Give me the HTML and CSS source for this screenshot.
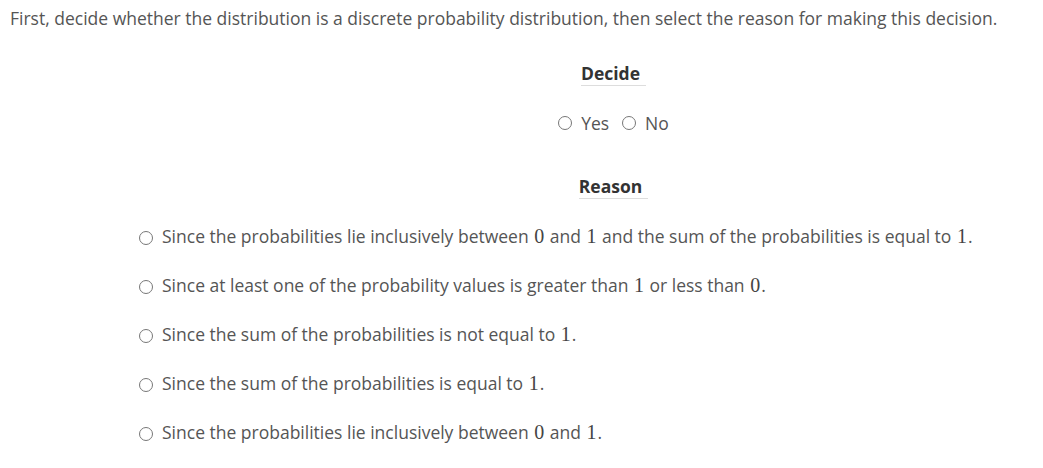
FILE: index.html
```html
<!DOCTYPE html>
<html>
<head>
<meta charset="utf-8">
<link rel="stylesheet" href="styles.css">
</head>
<body>
<p class="prompt">First, decide whether the distribution is a discrete probability distribution, then select the reason for making this decision.</p>
<div class="center-col">
  <div class="heading-wrap"><span class="heading">Decide</span></div>
  <div class="yesno">
    <label class="opt"><span class="radio"></span>Yes</label>
    <label class="opt"><span class="radio"></span>No</label>
  </div>
  <div class="heading-wrap heading-reason"><span class="heading">Reason</span></div>
</div>
<div class="reasons">
  <label class="opt row"><span class="radio"></span>Since the probabilities lie inclusively between <span class="m">0</span> and <span class="m">1</span> and the sum of the probabilities is equal to <span class="m">1</span>.</label>
  <label class="opt row"><span class="radio"></span>Since at least one of the probability values is greater than <span class="m">1</span> or less than <span class="m">0</span>.</label>
  <label class="opt row"><span class="radio"></span>Since the sum of the probabilities is not equal to <span class="m">1</span>.</label>
  <label class="opt row"><span class="radio"></span>Since the sum of the probabilities is equal to <span class="m">1</span>.</label>
  <label class="opt row"><span class="radio"></span>Since the probabilities lie inclusively between <span class="m">0</span> and <span class="m">1</span>.</label>
</div>
</body>
</html>
```

FILE: styles.css
```css
html, body {
  margin: 0;
  padding: 0;
  background: #fff;
}
body {
  font-family: "Open Sans", "DejaVu Sans", sans-serif;
  font-size: 17.5px;
  color: #555;
}
.prompt {
  margin: 0;
  padding: 6px 0 0 10px;
  line-height: 24px;
}
.center-col {
  padding-left: 184px;
  text-align: center;
}
.heading-wrap {
  margin-top: 31px;
  line-height: 24px;
}
.heading {
  display: inline-block;
  font-weight: 700;
  color: #333;
  padding-right: 6px;
  border-bottom: 1px solid #ddd;
  line-height: 24px;
}
.yesno {
  margin-top: 25px;
  line-height: 24px;
  display: flex;
  justify-content: center;
  gap: 13px;
}
.opt {
  display: inline-flex;
  align-items: center;
}
.radio {
  display: inline-block;
  width: 12px;
  height: 12px;
  border: 1.5px solid #777;
  border-radius: 50%;
  margin-right: 9px;
}
.heading-reason {
  margin-top: 39px;
}
.reasons {
  padding-left: 139px;
  padding-top: 25px;
  display: flex;
  flex-direction: column;
  gap: 25px;
}
.row {
  line-height: 24px;
  white-space: pre-wrap;
}
.row .m {
  font-family: "Liberation Serif", "DejaVu Serif", serif;
  font-size: 20px;
  color: #444;
  margin: 0 1px;
}
.reasons .opt {
  display: block;
}
.reasons .radio {
  vertical-align: -2px;
}
```
